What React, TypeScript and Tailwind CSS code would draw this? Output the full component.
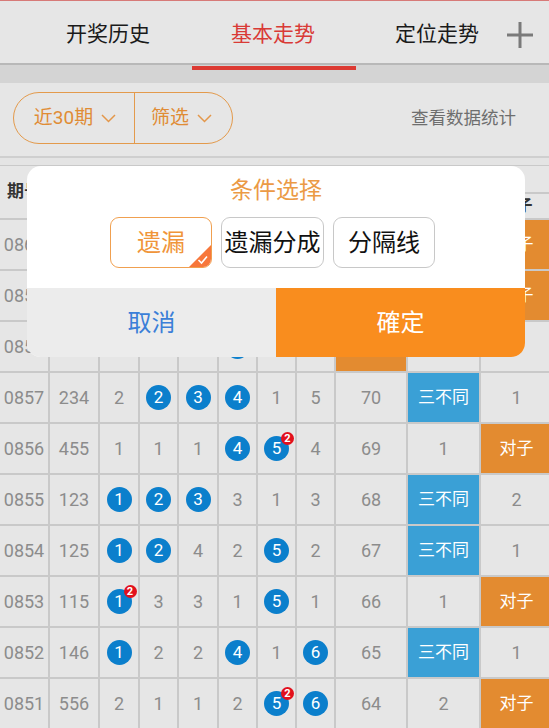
import React from "react";

type Miss = number | { ball: number; badge?: number };

type Row = {
  no: string;
  code: string;
  miss: Miss[];
  leopard: number | "豹子";
  diff: number | "三不同";
  pair: number | "对子";
};

const ROWS: Row[] = [
  { no: "0860", code: "366", miss: [2, 4, { ball: 3 }, 2, 5, { ball: 6, badge: 2 }], leopard: 2, diff: 3, pair: "对子" },
  { no: "0859", code: "166", miss: [{ ball: 1 }, 3, 3, 1, 4, { ball: 6, badge: 2 }], leopard: 1, diff: 2, pair: "对子" },
  { no: "0858", code: "444", miss: [3, 1, 1, { ball: 4, badge: 3 }, 2, 6], leopard: "豹子", diff: 1, pair: 2 },
  { no: "0857", code: "234", miss: [2, { ball: 2 }, { ball: 3 }, { ball: 4 }, 1, 5], leopard: 70, diff: "三不同", pair: 1 },
  { no: "0856", code: "455", miss: [1, 1, 1, { ball: 4 }, { ball: 5, badge: 2 }, 4], leopard: 69, diff: 1, pair: "对子" },
  { no: "0855", code: "123", miss: [{ ball: 1 }, { ball: 2 }, { ball: 3 }, 3, 1, 3], leopard: 68, diff: "三不同", pair: 2 },
  { no: "0854", code: "125", miss: [{ ball: 1 }, { ball: 2 }, 4, 2, { ball: 5 }, 2], leopard: 67, diff: "三不同", pair: 1 },
  { no: "0853", code: "115", miss: [{ ball: 1, badge: 2 }, 3, 3, 1, { ball: 5 }, 1], leopard: 66, diff: 1, pair: "对子" },
  { no: "0852", code: "146", miss: [{ ball: 1 }, 2, 2, { ball: 4 }, 1, { ball: 6 }], leopard: 65, diff: "三不同", pair: 1 },
  { no: "0851", code: "556", miss: [2, 1, 1, 2, { ball: 5, badge: 2 }, { ball: 6 }], leopard: 64, diff: 2, pair: "对子" },
];

const cell = "flex items-center justify-center bg-[#e6e6e6] text-[18px] text-[#8c8c8c]";

function Chevron() {
  return (
    <svg width="15" height="9" viewBox="0 0 15 9" fill="none" className="ml-[8px]">
      <polyline points="1,1 7.5,7.5 14,1" stroke="#e3974a" strokeWidth="1.5" />
    </svg>
  );
}

function Ball({ n, badge }: { n: number; badge?: number }) {
  return (
    <div className="relative flex h-[25px] w-[25px] items-center justify-center rounded-full bg-[#0b7fcc] text-[17px] leading-none text-white">
      {n}
      {badge ? (
        <span className="absolute -right-[5px] -top-[4px] flex h-[13px] w-[13px] items-center justify-center rounded-full bg-[#e2101c] text-[11px] font-bold leading-none text-white">
          {badge}
        </span>
      ) : null}
    </div>
  );
}

function Tag({ v, type }: { v: number | string; type: "blue" | "orange" }) {
  if (typeof v === "number") return <div className={cell}>{v}</div>;
  return (
    <div
      className={
        type === "blue"
          ? "flex items-center justify-center bg-[#3aa0d6] text-[17px] text-white"
          : "flex items-center justify-center bg-[#e38b30] text-[17px] text-white"
      }
    >
      {v}
    </div>
  );
}

export default function App() {
  return (
    <div
      className="relative h-[728px] w-[549px] overflow-hidden bg-[#e6e6e6]"
      style={{ fontFamily: 'Roboto, "Noto Sans CJK SC", sans-serif' }}
    >
      {/* tabs */}
      <div className="flex h-[63px] items-center border-t border-[#d77a78] pl-[26px] pt-[5px] text-[21px] text-[#1a1a1a]">
        <div className="w-[164px] text-center">开奖历史</div>
        <div className="w-[166px] text-center text-[#d93a36]">基本走势</div>
        <div className="w-[162px] text-center">定位走势</div>
        <svg width="26" height="26" viewBox="0 0 26 26" className="-ml-[11px]">
          <line x1="13" y1="0" x2="13" y2="26" stroke="#7a7a7a" strokeWidth="3" />
          <line x1="0" y1="13" x2="26" y2="13" stroke="#7a7a7a" strokeWidth="3" />
        </svg>
      </div>
      <div className="h-[20px] border-t-2 border-[#b8b8b8] bg-[#d4d4d4]">
        <div className="ml-[192px] mt-[1px] h-[4px] w-[164px] bg-[#dc3a33]" />
      </div>

      {/* filter bar */}
      <div className="flex h-[75px] items-center justify-between border-b-2 border-[#cfcfcf] pb-[3px] pl-[13px] pr-[33px]">
        <div className="flex h-[52px] w-[220px] items-center rounded-full border-[1.5px] border-[#e39a4c] text-[19px] text-[#e08c35]">
          <div className="flex h-full w-[121px] items-center justify-center border-r-[1.5px] border-[#e39a4c] pl-[2px]">
            近30期
            <Chevron />
          </div>
          <div className="flex flex-1 items-center justify-center pr-[4px]">
            筛选
            <Chevron />
          </div>
        </div>
        <div className="text-[17.5px] text-[#6e6e6e]">查看数据统计</div>
      </div>

      <div className="h-[7px] bg-[#e4e4e4]" />

      {/* table */}
      <div className="grid grid-cols-[48px_48px_38px_37px_38px_37px_37px_37px_70px_71px_71px] grid-rows-[26px_24px] auto-rows-[49px] gap-[2px] border-t border-[#c9c9c9] bg-[#c9c9c9]">
        <div className="row-span-2 flex items-center justify-center bg-[#e6e6e6] text-[17px] font-bold text-[#333]">期号</div>
        <div className="row-span-2 flex items-center justify-center bg-[#e6e6e6] text-[17px] font-bold text-[#333]">开奖号</div>
        <div className="col-span-6 flex items-center justify-center bg-[#e6e6e6] text-[16px] font-bold text-[#333]">号码分布</div>
        <div className="col-span-3 flex items-center justify-center bg-[#e6e6e6] text-[16px] font-bold text-[#333]" />
        {[1, 2, 3, 4, 5, 6].map((n) => (
          <div key={n} className="flex items-center justify-center bg-[#e6e6e6] text-[16px] font-bold text-[#333]">
            {n}
          </div>
        ))}
        <div className="flex items-center justify-center bg-[#e6e6e6] text-[16px] font-bold text-[#333]">豹子</div>
        <div className="flex items-center justify-center bg-[#e6e6e6] text-[16px] font-bold text-[#333]">三不同</div>
        <div className="flex items-center justify-center bg-[#e6e6e6] text-[16px] font-bold text-[#333]">对子</div>

        {ROWS.map((r) => (
          <React.Fragment key={r.no}>
            <div className={cell}>{r.no}</div>
            <div className={cell}>{r.code}</div>
            {r.miss.map((m, i) => (
              <div key={i} className={cell}>
                {typeof m === "number" ? m : <Ball n={m.ball} badge={m.badge} />}
              </div>
            ))}
            <Tag v={r.leopard} type="orange" />
            <Tag v={r.diff} type="blue" />
            <Tag v={r.pair} type="orange" />
          </React.Fragment>
        ))}
      </div>

      {/* dialog */}
      <div className="absolute left-[27px] top-[166px] w-[498px] overflow-hidden rounded-[14px] bg-white">
        <div className="flex h-[122px] flex-col items-center">
          <div className="mt-[10px] text-[23px] leading-[30px] text-[#eb9a45]">条件选择</div>
          <div className="mt-[11px] flex gap-[9px] pr-[7px]">
            <div className="relative flex h-[51px] w-[102px] items-center justify-center overflow-hidden rounded-[9px] border-[1.5px] border-[#f0a050] text-[24px] text-[#f0953a]">
              遗漏
              <svg width="22" height="22" viewBox="0 0 22 22" className="absolute bottom-0 right-0">
                <polygon points="22,0 22,22 0,22" fill="#f7773b" />
                <polyline points="9.5,15 12.5,18 18,11.5" fill="none" stroke="white" strokeWidth="1.6" />
              </svg>
            </div>
            <div className="flex h-[51px] w-[103px] items-center justify-center whitespace-nowrap rounded-[9px] border-[1.5px] border-[#c8c8c8] text-[24px] text-[#111]">
              遗漏分成
            </div>
            <div className="flex h-[51px] w-[102px] items-center justify-center rounded-[9px] border-[1.5px] border-[#c8c8c8] text-[24px] text-[#111]">
              分隔线
            </div>
          </div>
        </div>
        <div className="flex h-[69px]">
          <div className="flex w-[249px] items-center justify-center bg-[#ececec] text-[24px] text-[#3b7fd8]">取消</div>
          <div className="flex flex-1 items-center justify-center bg-[#f98d1e] text-[24px] text-white">確定</div>
        </div>
      </div>
    </div>
  );
}
